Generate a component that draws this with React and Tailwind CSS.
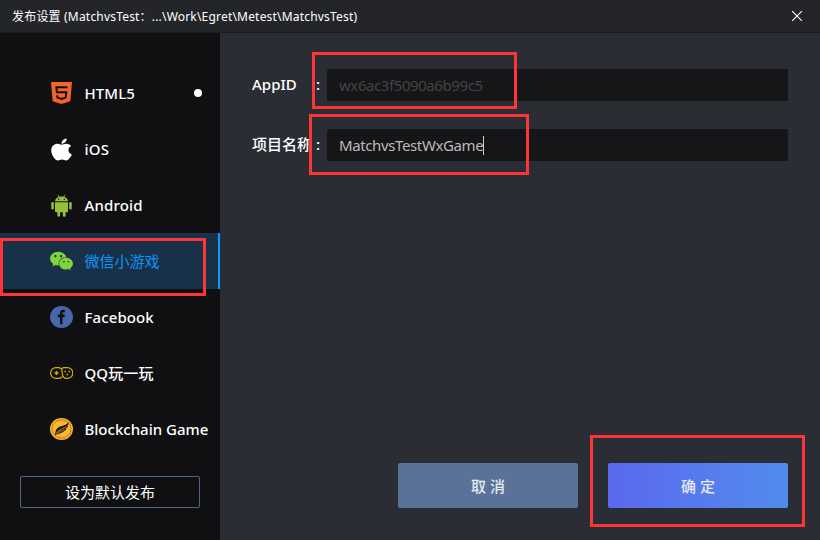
import React from "react";
import { FaApple, FaWeixin } from "react-icons/fa";

const Html5Icon = () => (
  <svg width="21" height="22" viewBox="0 0 21 22">
    <path d="M0 0h21l-1.700 19.200L10.500 22l-8.800-2.800z" fill="#f16529" />
    <path d="M16.500 5.200H5.400l.5 5.100h9.400l-.6 5.300-4.200 1.300-4.100-1.300-.2-2.200" fill="none" stroke="#101012" strokeWidth="2" />
  </svg>
);

const AndroidIcon = () => (
  <svg width="21" height="23" viewBox="0 0 21 23" fill="#97c03d">
    <path d="M6.800.8l1.500 2.400M14.200.8l-1.500 2.400" stroke="#97c03d" strokeWidth=".8" />
    <path d="M4 7.300C4.200 4.300 7 2.400 10.500 2.400S16.800 4.300 17 7.300z" />
    <path d="M4 8.200h13V17a1.300 1.300 0 0 1-1.300 1.300H5.300A1.300 1.300 0 0 1 4 17z" />
    <rect x="0.300" y="8" width="2.500" height="7.400" rx="1.250" />
    <rect x="18.200" y="8" width="2.500" height="7.400" rx="1.250" />
    <rect x="6.400" y="16" width="2.700" height="6.800" rx="1.300" />
    <rect x="11.900" y="16" width="2.700" height="6.800" rx="1.300" />
    <circle cx="7.700" cy="5.200" r=".7" fill="#101012" />
    <circle cx="13.300" cy="5.200" r=".7" fill="#101012" />
  </svg>
);

const FacebookIcon = () => (
  <svg width="23" height="22" viewBox="0 0 23 22">
    <ellipse cx="11.500" cy="11" rx="11.500" ry="11" fill="#4867aa" />
    <path d="M10 18.300v-7H7.800V8.600H10V7c0-2.200 1.300-3.300 3.200-3.300h1.600v2.500h-1.200c-.8 0-1.100.4-1.100 1.100v1.300h2.300l-.3 2.700h-2v7z" fill="#101012" />
  </svg>
);

const PlayIcon = () => (
  <svg width="23" height="12" viewBox="0 0 23 12" fill="none" stroke="#d8b000" strokeWidth="1.200">
    <path d="M12.200 9.700C11.300 10.900 10 11.400 8.500 11.400H6a5.400 5.400 0 0 1 0-10.800h2.500c2 0 3.200 1 3.500 3l.4 3.500c.3 2.800 1.800 4.300 4 4.300h1a5.400 5.400 0 0 0 0-10.800h-3.200c-1 0-1.800.3-2.400 1" />
    <path d="M6.500 4v4M4.500 6h4" strokeWidth="1.500" />
    <path d="M14.500 4.500H16M18.500 4.500H20M16.500 7.500H18" strokeWidth="1.500" />
  </svg>
);

const FeatherIcon = () => (
  <svg width="23" height="22" viewBox="0 0 23 22">
    <ellipse cx="11.500" cy="11" rx="11.500" ry="11" fill="#fdb62f" />
    <ellipse cx="11.500" cy="11" rx="9.600" ry="9.200" fill="none" stroke="#8a6420" strokeWidth=".7" />
    <path d="M5 17.500C5 12 7 9.500 11 8.200c3.500-1 6-2 7.800-4-.1 1.800-.7 2.800-1.700 3.700l1 .1c-.7 1.500-1.600 2.200-2.700 2.700l.9.200c-.8 1.300-1.800 2-3 2.300l.7.300c-1.300 1.300-2.800 1.600-4 1.800l.6.400c-1.600.8-3.500.3-4.600.8z" fill="#1b1610" />
    <path d="M6 15.500c2-3.500 6-4.200 10.500-7M7 15.500c2-2 4.500-2 7.500-4M7 17c2-1.500 3.500-1.200 5.500-2.200" stroke="#fdb62f" strokeWidth=".7" fill="none" />
  </svg>
);

const items = [
  { label: "HTML5", icon: <Html5Icon />, track: "tracking-[0.1px]", dot: true },
  { label: "iOS", icon: <FaApple className="h-[25px] w-[21px]" preserveAspectRatio="none" color="#fff" />, track: "tracking-[0.2px]" },
  { label: "Android", icon: <AndroidIcon />, track: "tracking-[0.15px]" },
  { label: "微信小游戏", icon: <FaWeixin className="-translate-x-[0.500px]" size={24} color="#7ed63a" />, track: "font-normal", active: true },
  { label: "Facebook", icon: <FacebookIcon />, track: "tracking-[0.1px]" },
  { label: "QQ玩一玩", icon: <PlayIcon />, track: "tracking-[0.1px]" },
  { label: "Blockchain Game", icon: <FeatherIcon />, track: "" },
];

function Field({ label, children }) {
  return (
    <div className="flex h-8 items-center">
      <div className="flex w-[75px] justify-between pb-0.5 pr-[7px] text-[15px] font-medium text-white">
        <span className="whitespace-nowrap">{label}</span>
        <span>:</span>
      </div>
      <div className="flex h-8 flex-1 items-center rounded-[2px] bg-[#161618] pl-3 text-[15px]">{children}</div>
    </div>
  );
}

const Mark = ({ className }) => <div className={`pointer-events-none absolute border-[3px] border-[#fd3536] ${className}`} />;

export default function App() {
  return (
    <div className="relative flex h-[540px] w-[820px] flex-col overflow-hidden bg-[#2b2d35] font-['Noto_Sans','Noto_Sans_CJK_SC',sans-serif]">
      <header className="flex h-[33px] shrink-0 items-center justify-between border-b border-[#1c1c1e] bg-[#242529] pl-3 pr-[18px] text-white">
        <h1 className="whitespace-nowrap pt-px text-[12px] tracking-[0.19px]">发布设置 (MatchvsTest：...\Work\Egret\Metest\MatchvsTest)</h1>
        <svg width="10" height="10" viewBox="0 0 10 10" stroke="#fff" strokeWidth="1.100">
          <path d="M0 0l10 10M10 0L0 10" />
        </svg>
      </header>
      <div className="flex flex-1">
        <aside className="flex w-[220px] flex-col bg-[#101012] pt-8">
          {items.map((it) => (
            <div key={it.label} className={`flex h-14 shrink-0 items-center pl-[49px] text-[15px] font-medium ${it.active ? "border-r-2 border-[#0a9dfb] bg-[#183148] text-[#0a96fb]" : "text-white"}`}>
              <span className="flex w-[25px] justify-center">{it.icon}</span>
              <span className={`ml-[10.500px] whitespace-nowrap ${it.track}`}>{it.label}</span>
              {it.dot && <span className="ml-auto mr-[18px] size-2 rounded-full bg-white" />}
            </div>
          ))}
          <button className="mx-5 mt-[19px] h-8 rounded-[2px] border border-[#4c658b] text-[15px] text-white">设为默认发布</button>
        </aside>
        <main className="flex flex-1 flex-col px-8 pb-8 pt-9">
          <div className="flex flex-col gap-7">
            <Field label="AppID"><span className="tracking-[-0.42px] text-[#434345]">wx6ac3f5090a6b99c5</span></Field>
            <Field label="项目名称"><span className="tracking-[-0.38px] text-[#bbbbbb]">MatchvsTestWxGame</span><span className="h-[19px] w-px bg-[#cccccc]" /></Field>
          </div>
          <div className="mt-auto flex justify-end gap-[30px] text-[15px] font-medium text-[#e6eaf0]">
            <button className="h-[45px] w-[180px] rounded-[2px] bg-[#5b7298] pt-0.5">取 消</button>
            <button className="h-[45px] w-[180px] rounded-[2px] bg-linear-to-r from-[#5a68ee] to-[#528bed] pt-0.5">确 定</button>
          </div>
        </main>
      </div>
      <Mark className="left-0 top-[238px] h-[58px] w-[206px]" />
      <Mark className="left-[312px] top-[52px] h-[57px] w-[205px]" />
      <Mark className="left-[309px] top-[114px] h-[61px] w-[220px]" />
      <Mark className="left-[590px] top-[435px] h-[92px] w-[215px]" />
    </div>
  );
}
